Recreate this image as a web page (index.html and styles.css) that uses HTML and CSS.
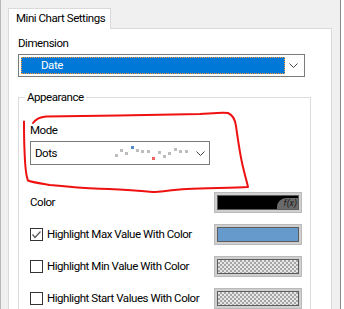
FILE: index.html
```html
<!DOCTYPE html>
<html lang="en">
<head>
    <meta charset="UTF-8">
    <title>Mini Chart Settings</title>
    <link rel="stylesheet" href="styles.css">
</head>
<body>

<div class="screen">
    <div class="window">
        <div class="topbar"></div>
        <div class="window-body">
            <div class="edge-left"></div>
            <div class="client">
                <div class="tabs">
                    <div class="tab">Mini Chart Settings</div>
                </div>
                <div class="page">
                    <div class="label">Dimension</div>
                    <div class="combo combo-dim">
                        <div class="combo-sel">Date</div>
                        <svg class="chev" width="9" height="5" viewBox="0 0 9 5"><polyline points="0.5,0.5 4.5,4.5 8.5,0.5" fill="none" stroke="#444" stroke-width="1"/></svg>
                    </div>

                    <fieldset class="group">
                        <legend>Appearance</legend>
                        <div class="group-body">
                            <div class="label">Mode</div>
                            <div class="combo combo-mode">
                                <span class="combo-text">Dots</span>
                                <!-- превью точек -->
                                <svg class="dots" width="76" height="22" viewBox="0 0 76 22">
                                    <rect x="0" y="12" width="3" height="3" fill="#bdbdbd"/>
                                    <rect x="5" y="7" width="3" height="3" fill="#bdbdbd"/>
                                    <rect x="10" y="10" width="3" height="3" fill="#bdbdbd"/>
                                    <rect x="16" y="4" width="3" height="3" fill="#5588cc"/>
                                    <rect x="21" y="7" width="3" height="3" fill="#bdbdbd"/>
                                    <rect x="26" y="8" width="3" height="3" fill="#bdbdbd"/>
                                    <rect x="32" y="8" width="3" height="3" fill="#bdbdbd"/>
                                    <rect x="37" y="15" width="3" height="3" fill="#f06262"/>
                                    <rect x="43" y="9" width="3" height="3" fill="#bdbdbd"/>
                                    <rect x="48" y="13" width="3" height="3" fill="#bdbdbd"/>
                                    <rect x="53" y="10" width="3" height="3" fill="#bdbdbd"/>
                                    <rect x="59" y="6" width="3" height="3" fill="#bdbdbd"/>
                                    <rect x="64" y="8" width="3" height="3" fill="#bdbdbd"/>
                                    <rect x="70" y="8" width="3" height="3" fill="#bdbdbd"/>
                                </svg>
                                <svg class="chev" width="9" height="5" viewBox="0 0 9 5"><polyline points="0.5,0.5 4.5,4.5 8.5,0.5" fill="none" stroke="#444" stroke-width="1"/></svg>
                            </div>

                            <div class="row row-first">
                                <span class="row-label">Color</span>
                                <div class="swatch"><div class="fill fill-black"><span class="fx">f(x)</span></div></div>
                            </div>
                            <div class="row">
                                <span class="check">
                                    <svg width="11" height="11" viewBox="0 0 11 11"><polyline points="1.5,5.5 4,8.5 9.5,2.5" fill="none" stroke="#555" stroke-width="1.2"/></svg>
                                </span>
                                <span class="row-label">Highlight Max Value With Color</span>
                                <div class="swatch"><div class="fill fill-blue"></div></div>
                            </div>
                            <div class="row">
                                <span class="check"></span>
                                <span class="row-label">Highlight Min Value With Color</span>
                                <div class="swatch"><div class="fill fill-checker"></div></div>
                            </div>
                            <div class="row">
                                <span class="check"></span>
                                <span class="row-label">Highlight Start Values With Color</span>
                                <div class="swatch"><div class="fill fill-checker"></div></div>
                            </div>
                        </div>
                    </fieldset>
                </div>
            </div>
        </div>
    </div>
    <div class="outside"></div>

    <!-- красная обводка поверх окна -->
    <svg class="scribble" width="344" height="309" viewBox="0 0 344 309">
        <path d="M33,123 C36,119 40,117 46,116.5 C90,116 160,115 200,114 C215,113 224,112 228,113 C233,115 235,119 236,126 C238,140 240,155 243,167 C245,176 247,182 248,187 C235,188 210,188 187,189 C170,190 160,192 153,192 C140,191 120,189 100,188.7 C80,188 60,186 50,185 C38,183 31,182 28,180.5 C26,176 25,165 24.5,150 C24,140 24,130 24,121.5" fill="none" stroke="#ee1111" stroke-width="2" stroke-linecap="round" stroke-linejoin="round"/>
    </svg>
</div>

</body>
</html>
```

FILE: styles.css
```css
body {
    margin: 0;
    padding: 0;
    font-family: Roboto, "Liberation Sans", sans-serif;
    font-size: 11.5px;
    letter-spacing: -0.45px;
    color: #000;
    background: #f0f0f0;
}

.screen {
    position: relative;
    display: flex;
    width: 344px;
    height: 309px;
    overflow: hidden;
}

.window {
    width: 341px;
    display: flex;
    flex-direction: column;
    background: #f0f0f0;
}

.topbar {
    height: 4px;
    background: #fff;
}

.window-body {
    flex: 1;
    display: flex;
}

.edge-left {
    width: 1px;
    background: #b8b8b8;
}

.client {
    flex: 1;
    display: flex;
    flex-direction: column;
    padding: 8px 0 0 7px;
}

.tabs {
    display: flex;
}

.tab {
    position: relative;
    z-index: 1;
    width: 103px;
    height: 21px;
    box-sizing: border-box;
    padding: 2px 0 0 7px;
    line-height: 15px;
    background: #fff;
    border: 1px solid #d9d9d9;
    border-bottom: none;
    margin-bottom: -1px;
}

.page {
    flex: 1;
    width: 324px;
    box-sizing: border-box;
    background: #fff;
    border: 1px solid #d9d9d9;
    border-bottom: none;
    padding: 7px 0 0 9px;
}

.label {
    line-height: 15px;
}

.combo {
    display: flex;
    align-items: center;
    box-sizing: border-box;
    border: 1px solid #7a7a7a;
    background: #fff;
    margin-top: 3px;
}

.combo-dim {
    width: 287px;
    height: 23px;
    padding: 2px;
}

.combo-sel {
    width: 264px;
    height: 17px;
    box-sizing: border-box;
    background: #0078d7;
    border: 1px dotted #ff9a3c;
    color: #fff;
    line-height: 15px;
    padding-left: 19px;
}

.chev {
    display: block;
    margin-left: auto;
    margin-right: 4px;
}

.group {
    width: 293px;
    box-sizing: border-box;
    margin: 12px 0 0 0;
    padding: 0;
    border: 1px solid #dcdcdc;
    min-width: 0;
}

.group legend {
    margin-left: 6px;
    padding: 0 2px;
    line-height: 16px;
}

.group-body {
    padding: 18px 8px 0 11px;
}

.combo-mode {
    width: 180px;
    height: 24px;
}

.combo-text {
    width: 84px;
    box-sizing: border-box;
    padding-left: 4px;
    line-height: 15px;
}

.dots {
    display: block;
}

.row {
    display: flex;
    align-items: center;
    height: 21px;
    margin-top: 11px;
}

.row-first {
    margin-top: 27px;
}

.row-label {
    line-height: 15px;
}

.check {
    width: 13px;
    height: 13px;
    box-sizing: border-box;
    border: 1px solid #333;
    background: #fff;
    margin-right: 4px;
    display: flex;
    align-items: center;
    justify-content: center;
}

.check svg {
    display: block;
}

.swatch {
    margin-left: auto;
    width: 88px;
    height: 21px;
    box-sizing: border-box;
    border: 1px solid #bababa;
    background: #cfcfcf;
    padding: 2px;
}

.fill {
    height: 100%;
    box-sizing: border-box;
    border: 1px solid #5c5c5c;
}

.fill-black {
    background: #000;
    display: flex;
    justify-content: flex-end;
    align-items: flex-end;
}

.fx {
    height: 11px;
    width: 20px;
    background: #6a6a6a;
    border-top-left-radius: 9px;
    color: #1a1a1a;
    font-style: italic;
    font-size: 9px;
    line-height: 11px;
    letter-spacing: 0;
    text-align: right;
    padding-right: 1px;
}

.fill-blue {
    background: #6699cc;
}

.fill-checker {
    background-color: #e6e6e6;
    background-image: conic-gradient(#a6a6a6 25%, transparent 0 50%, #a6a6a6 0 75%, transparent 0);
    background-size: 4px 4px;
}

.outside {
    width: 3px;
    border-left: 1px solid #8c8c8c;
    background: #fff;
}

.scribble {
    position: absolute;
    left: 0;
    top: 0;
    pointer-events: none;
}
```
